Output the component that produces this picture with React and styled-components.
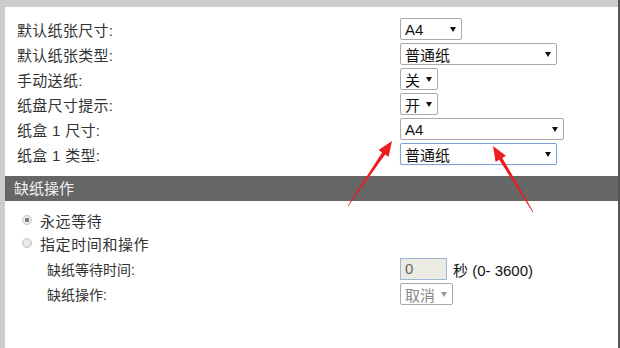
import React from "react";
import styled, { createGlobalStyle } from "styled-components";

const GlobalStyle = createGlobalStyle`
  html, body {
    margin: 0;
    padding: 0;
    background: #cdcdcd;
  }
  body {
    font-family: "Liberation Sans", "Noto Sans CJK SC", sans-serif;
    color: #333;
  }
`;

// Data
const paperRows = [
  { label: "默认纸张尺寸:", value: "A4", width: 62 },
  { label: "默认纸张类型:", value: "普通纸", width: 157 },
  { label: "手动送纸:", value: "关", width: 38 },
  { label: "纸盘尺寸提示:", value: "开", width: 38 },
  { label: "纸盒 1 尺寸:", value: "A4", width: 164 },
  { label: "纸盒 1 类型:", value: "普通纸", width: 157, focused: true },
];

const arrows = [
  { from: [348, 206], to: [392, 141] },
  { from: [533, 212], to: [493, 146] },
];

// Build a tapered arrow outline from tail to tip
const arrowPath = ({ from, to }) => {
  const [x1, y1] = from;
  const [x2, y2] = to;
  const len = Math.hypot(x2 - x1, y2 - y1);
  const ux = (x2 - x1) / len;
  const uy = (y2 - y1) / len;
  const nx = -uy;
  const ny = ux;
  const head = 15;
  const bx = x2 - ux * head;
  const by = y2 - uy * head;
  const p = (x, y, w) => `${(x + nx * w).toFixed(1)},${(y + ny * w).toFixed(1)}`;
  return `M${p(x1, y1, 0.3)} L${p(bx, by, 1.8)} L${p(bx, by, 6)} L${x2},${y2} L${p(bx, by, -6)} L${p(bx, by, -1.8)} L${p(x1, y1, -0.3)} Z`;
};

export default function App() {
  return (
    <>
      <GlobalStyle />
      <Page>
        <Panel>
          <SettingsGrid>
            {paperRows.map((row) => (
              <React.Fragment key={row.label}>
                <Label>{row.label}</Label>
                <Select $width={row.width} $focused={row.focused}>
                  <span>{row.value}</span>
                  <Caret />
                </Select>
              </React.Fragment>
            ))}
          </SettingsGrid>

          <SectionBar>缺纸操作</SectionBar>

          <RadioList>
            <RadioRow>
              <Radio $checked />
              <span>永远等待</span>
            </RadioRow>
            <RadioRow>
              <Radio />
              <span>指定时间和操作</span>
            </RadioRow>
          </RadioList>

          <SubGrid>
            <SubLabel>缺纸等待时间:</SubLabel>
            <InlineGroup>
              <NumberBox>0</NumberBox>
              <Unit>秒 (0- 3600)</Unit>
            </InlineGroup>
            <SubLabel>缺纸操作:</SubLabel>
            <Select $width={53} $disabled>
              <span>取消</span>
              <Caret $disabled />
            </Select>
          </SubGrid>
        </Panel>

        <Overlay width="620" height="348" viewBox="0 0 620 348">
          {arrows.map((a, i) => (
            <path key={i} d={arrowPath(a)} fill="#ec1c1f" />
          ))}
        </Overlay>
      </Page>
    </>
  );
}

function Caret({ $disabled }) {
  return (
    <CaretSvg width="6" height="5" viewBox="0 0 6 5">
      <path d="M0 0 H6 L3 5 Z" fill={$disabled ? "#999" : "#111"} />
    </CaretSvg>
  );
}

const Page = styled.div`
  position: relative;
  width: 620px;
  height: 348px;
  box-sizing: border-box;
  padding: 7px 0 0 5px;
  border-right: 2px solid #555;
  background: #cdcdcd;
  overflow: hidden;
`;

const Panel = styled.div`
  height: 100%;
  background: #fff;
  display: flex;
  flex-direction: column;
`;

const SettingsGrid = styled.div`
  display: grid;
  grid-template-columns: 383px auto;
  grid-auto-rows: 22px;
  row-gap: 3px;
  padding: 11px 0 0 12px;
  align-items: center;
  justify-items: start;
`;

const Label = styled.div`
  font-size: 15px;
  letter-spacing: 0.3px;
  color: #333;
  white-space: nowrap;
`;

const Select = styled.div`
  width: ${(p) => p.$width}px;
  height: 22px;
  box-sizing: border-box;
  display: flex;
  align-items: center;
  justify-content: space-between;
  padding: 0 5px 0 4px;
  border: 1px solid ${(p) => (p.$focused ? "#7da2d6" : "#aaa")};
  box-shadow: ${(p) => (p.$focused ? "0 0 1px #9cbbe6" : "none")};
  border-radius: 2px;
  background: #fff;
  font-size: 15px;
  color: ${(p) => (p.$disabled ? "#888" : "#111")};
  white-space: nowrap;
`;

const CaretSvg = styled.svg`
  flex: none;
`;

const SectionBar = styled.div`
  margin-top: 11px;
  height: 25px;
  background: #666;
  color: #f2f2f2;
  font-size: 15px;
  line-height: 25px;
  padding-left: 9px;
`;

const RadioList = styled.div`
  display: flex;
  flex-direction: column;
  gap: 1px;
  padding: 8px 0 0 17px;
`;

const RadioRow = styled.div`
  height: 22px;
  display: flex;
  align-items: center;
  gap: 8px;
  font-size: 15px;
  letter-spacing: 0.6px;
  color: #333;
`;

const Radio = styled.span`
  width: 10px;
  height: 10px;
  box-sizing: border-box;
  border-radius: 50%;
  border: 1px solid #c4c4c4;
  background: radial-gradient(
    circle,
    ${(p) => (p.$checked ? "#7a7a7a 0 2px, #eee 2.5px" : "#f2f2f2 0, #dcdcdc 100%")}
  );
`;

const SubGrid = styled.div`
  display: grid;
  grid-template-columns: 353px auto;
  grid-auto-rows: 22px;
  row-gap: 3px;
  padding: 4px 0 0 42px;
  align-items: center;
  justify-items: start;
`;

const SubLabel = styled.div`
  font-size: 14px;
  color: #333;
`;

const InlineGroup = styled.div`
  display: flex;
  align-items: center;
  gap: 6px;
`;

const NumberBox = styled.div`
  width: 47px;
  height: 22px;
  box-sizing: border-box;
  border: 1px solid #9fb6d6;
  background: #ebebe4;
  color: #666;
  font-size: 15px;
  line-height: 20px;
  padding-left: 4px;
`;

const Unit = styled.span`
  font-size: 15px;
  color: #111;
`;

const Overlay = styled.svg`
  position: absolute;
  left: 0;
  top: 0;
  pointer-events: none;
`;
